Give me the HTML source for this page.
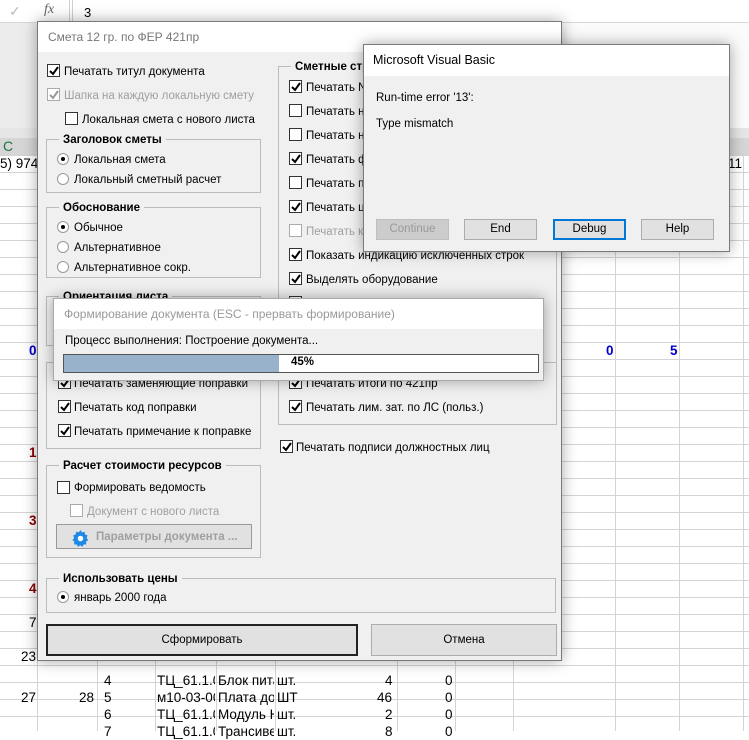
<!DOCTYPE html>
<html><head><meta charset="utf-8"><style>
*{box-sizing:border-box;margin:0;padding:0}
body{width:749px;height:731px;position:relative;overflow:hidden;background:#fff;font-family:"Liberation Sans",sans-serif;font-size:11.5px;color:#000}
.a{position:absolute;white-space:nowrap}
#m .a,#m .lg{margin-top:2px}
.grid{position:absolute;left:0;top:155px;width:749px;height:576px;background:repeating-linear-gradient(to bottom,#d4d4d4 0,#d4d4d4 1px,#fff 1px,#fff 17px)}
.vl{position:absolute;top:155px;width:1px;height:576px;background:#d4d4d4}
.c{position:absolute;font-size:13.5px;line-height:17px;white-space:nowrap;overflow:hidden}
.dlg{position:absolute;background:#f0f0f0;border:1px solid #7a7a7a;box-shadow:0 0 14px rgba(0,0,0,.35)}
.tb{position:absolute;left:0;top:0;right:0;background:#fff}
.cb{position:absolute;width:13px;height:13px;border:1px solid #333;background:#fff}
.cb.g{border-color:#aaa}
.cb svg{position:absolute;left:1px;top:1px}
.rb{position:absolute;width:12px;height:12px;border-radius:50%;border:1px solid #999;background:#fff}
.rb.on::after{content:"";position:absolute;left:3px;top:3px;width:4px;height:4px;border-radius:50%;background:#000}
.grp{position:absolute;border:1px solid #bcbcbc}
.lg{position:absolute;font-weight:bold;background:#f0f0f0;padding:0 4px;font-size:11.5px}
.btn{position:absolute;background:#e1e1e1;border:1px solid #adadad;text-align:center;font-size:11.5px}
.gray{color:#a0a0a0}
</style></head><body>
<div class="a" style="left:0;top:0;width:749px;height:128px;background:#fbfbfb"></div>
<div class="a" style="left:0;top:0;width:749px;height:23px;background:#fff;border-bottom:1px solid #d8d8d8"></div>
<div class="a" style="left:0;top:0;width:70px;height:23px;border-right:1px solid #d0d0d0"></div>
<div class="a" style="left:9px;top:3px;color:#bbb;font-size:14px">✓</div>
<div class="a" style="left:44px;top:2px;color:#666;font-size:14px;font-style:italic;font-family:'Liberation Serif',serif">fx</div>
<div class="a" style="left:72px;top:0;width:677px;height:23px;border-left:1px solid #d0d0d0"></div>
<div class="a" style="left:84px;top:5px;font-size:13px">3</div>
<div class="a" style="left:0;top:23px;width:40px;height:105px;background:#ececec"></div>
<div class="a" style="left:0;top:128px;width:749px;height:10px;background:#e6e6e6"></div>
<div class="a" style="left:0;top:138px;width:749px;height:17px;background:#d6d6d6"></div>
<div class="a" style="left:3px;top:138px;font-size:14px;color:#217346">C</div>
<div class="grid"></div>
<div class="vl" style="left:37px"></div><div class="vl" style="left:97px"></div><div class="vl" style="left:155px"></div><div class="vl" style="left:216px"></div><div class="vl" style="left:275px"></div><div class="vl" style="left:397px"></div><div class="vl" style="left:455px"></div><div class="vl" style="left:513px"></div><div class="vl" style="left:615px"></div><div class="vl" style="left:679px"></div><div class="vl" style="left:743px"></div>
<div class="c" style="left:0;top:155px">5) 974</div>
<div class="c" style="left:728px;top:155px">11</div>
<div class="c" style="left:29px;top:342px;color:#0000cc;font-weight:bold">0</div>
<div class="c" style="left:606px;top:342px;color:#0000cc;font-weight:bold">0</div>
<div class="c" style="left:670px;top:342px;color:#0000cc;font-weight:bold">5</div>
<div class="c" style="left:29px;top:444px;color:#8b0000;font-weight:bold">1</div>
<div class="c" style="left:29px;top:512px;color:#8b0000;font-weight:bold">3</div>
<div class="c" style="left:29px;top:580px;color:#8b0000;font-weight:bold">4</div>
<div class="c" style="left:29px;top:614px">7</div>
<div class="c" style="left:21px;top:648px">23</div>
<div class="c" style="left:104px;top:672px">4</div><div class="c" style="left:157px;top:672px;width:58px">ТЦ_61.1.0</div><div class="c" style="left:218px;top:672px;width:56px">Блок питания</div><div class="c" style="left:277px;top:672px">шт.</div><div class="c" style="left:385px;top:672px">4</div><div class="c" style="left:445px;top:672px">0</div>
<div class="c" style="left:21px;top:689px">27</div><div class="c" style="left:79px;top:689px">28</div><div class="c" style="left:104px;top:689px">5</div><div class="c" style="left:157px;top:689px;width:58px">м10-03-001</div><div class="c" style="left:218px;top:689px;width:56px">Плата доп</div><div class="c" style="left:277px;top:689px">ШТ</div><div class="c" style="left:377px;top:689px">46</div><div class="c" style="left:445px;top:689px">0</div>
<div class="c" style="left:104px;top:706px">6</div><div class="c" style="left:157px;top:706px;width:58px">ТЦ_61.1.0</div><div class="c" style="left:218px;top:706px;width:56px">Модуль Н</div><div class="c" style="left:277px;top:706px">шт.</div><div class="c" style="left:385px;top:706px">2</div><div class="c" style="left:445px;top:706px">0</div>
<div class="c" style="left:104px;top:723px">7</div><div class="c" style="left:157px;top:723px;width:58px">ТЦ_61.1.0</div><div class="c" style="left:218px;top:723px;width:56px">Трансивер</div><div class="c" style="left:277px;top:723px">шт.</div><div class="c" style="left:385px;top:723px">8</div><div class="c" style="left:445px;top:723px">0</div>

<div class="dlg" style="left:37px;top:21px;width:525px;height:640px">
 <div class="tb" style="height:30px"></div>
 <div class="a" style="left:10px;top:8px;color:#777;font-size:12px">Смета 12 гр. по ФЕР 421пр</div>
</div>
<div id="m" class="a" style="left:0;top:0">
<div class="cb" style="left:47px;top:64px"><svg width="10" height="10"><path d="M1 5 L4 8 L9 1" stroke="#000" stroke-width="2" fill="none"/></svg></div><div class="a" style="left:64px;top:64px">Печатать титул документа</div>
<div class="cb g" style="left:47px;top:88px"><svg width="10" height="10"><path d="M1 5 L4 8 L9 1" stroke="#999" stroke-width="2" fill="none"/></svg></div><div class="a gray" style="left:64px;top:88px">Шапка на каждую локальную смету</div>
<div class="cb" style="left:65px;top:112px"></div><div class="a" style="left:82px;top:112px">Локальная смета с нового листа</div>

<div class="grp" style="left:46px;top:139px;width:215px;height:54px"></div><div class="lg" style="left:59px;top:132px">Заголовок сметы</div>
<div class="rb on" style="left:57px;top:153px"></div><div class="a" style="left:74px;top:152px">Локальная смета</div>
<div class="rb" style="left:57px;top:173px"></div><div class="a" style="left:74px;top:172px">Локальный сметный расчет</div>

<div class="grp" style="left:46px;top:207px;width:215px;height:71px"></div><div class="lg" style="left:59px;top:200px">Обоснование</div>
<div class="rb on" style="left:57px;top:221px"></div><div class="a" style="left:74px;top:220px">Обычное</div>
<div class="rb" style="left:57px;top:241px"></div><div class="a" style="left:74px;top:240px">Альтернативное</div>
<div class="rb" style="left:57px;top:261px"></div><div class="a" style="left:74px;top:260px">Альтернативное сокр.</div>

<div class="grp" style="left:46px;top:296px;width:215px;height:50px"></div><div class="lg" style="left:59px;top:289px">Ориентация листа</div>

<div class="grp" style="left:46px;top:362px;width:215px;height:87px"></div>
<div class="cb" style="left:58px;top:376px"><svg width="10" height="10"><path d="M1 5 L4 8 L9 1" stroke="#000" stroke-width="2" fill="none"/></svg></div><div class="a" style="left:74px;top:376px">Печатать заменяющие поправки</div>
<div class="cb" style="left:58px;top:400px"><svg width="10" height="10"><path d="M1 5 L4 8 L9 1" stroke="#000" stroke-width="2" fill="none"/></svg></div><div class="a" style="left:74px;top:400px">Печатать код поправки</div>
<div class="cb" style="left:58px;top:424px"><svg width="10" height="10"><path d="M1 5 L4 8 L9 1" stroke="#000" stroke-width="2" fill="none"/></svg></div><div class="a" style="left:74px;top:424px">Печатать примечание к поправке</div>

<div class="grp" style="left:46px;top:465px;width:215px;height:93px"></div><div class="lg" style="left:59px;top:458px">Расчет стоимости ресурсов</div>
<div class="cb" style="left:57px;top:481px"></div><div class="a" style="left:74px;top:480px">Формировать ведомость</div>
<div class="cb g" style="left:70px;top:504px"></div><div class="a gray" style="left:87px;top:504px">Документ с нового листа</div>
<div class="btn" style="left:56px;top:524px;width:196px;height:25px;border-color:#999"></div>
<svg class="a" style="left:72px;top:528px" width="17" height="17" viewBox="0 0 16 16"><path fill="#1e88e5" d="M8 0l1.3 2.2 2.5-.6.4 2.5 2.4 1-.9 2.4 1.6 2-2.1 1.4.3 2.6-2.6.1-1.1 2.3-2.1-1.5-2.1 1.5-1.1-2.3-2.6-.1.3-2.6L.4 9.5 2 7.5l-.9-2.4 2.4-1 .4-2.5 2.5.6z"/><circle cx="8" cy="8" r="2.6" fill="#fff"/></svg>
<div class="a gray" style="left:96px;top:529px;font-weight:bold">Параметры документа ...</div>

<div class="grp" style="left:46px;top:578px;width:510px;height:35px"></div><div class="lg" style="left:59px;top:571px">Использовать цены</div>
<div class="rb on" style="left:57px;top:591px"></div><div class="a" style="left:74px;top:590px">январь 2000 года</div>

<div class="btn" style="left:46px;top:624px;width:312px;height:32px;border:2px solid #222;line-height:28px">Сформировать</div>
<div class="btn" style="left:371px;top:624px;width:186px;height:32px;line-height:30px">Отмена</div>

<div class="grp" style="left:278px;top:66px;width:279px;height:300px;border-bottom:none"></div><div class="lg" style="left:291px;top:59px">Сметные строки</div>
<div class="cb" style="left:289px;top:80px"><svg width="10" height="10"><path d="M1 5 L4 8 L9 1" stroke="#000" stroke-width="2" fill="none"/></svg></div><div class="a" style="left:306px;top:80px">Печатать N п/п</div>
<div class="cb" style="left:289px;top:104px"></div><div class="a" style="left:306px;top:104px">Печатать н</div>
<div class="cb" style="left:289px;top:128px"></div><div class="a" style="left:306px;top:128px">Печатать н</div>
<div class="cb" style="left:289px;top:152px"><svg width="10" height="10"><path d="M1 5 L4 8 L9 1" stroke="#000" stroke-width="2" fill="none"/></svg></div><div class="a" style="left:306px;top:152px">Печатать ф</div>
<div class="cb" style="left:289px;top:176px"></div><div class="a" style="left:306px;top:176px">Печатать п</div>
<div class="cb" style="left:289px;top:200px"><svg width="10" height="10"><path d="M1 5 L4 8 L9 1" stroke="#000" stroke-width="2" fill="none"/></svg></div><div class="a" style="left:306px;top:200px">Печатать ц</div>
<div class="cb g" style="left:289px;top:224px"></div><div class="a gray" style="left:306px;top:224px">Печатать к</div>
<div class="cb" style="left:289px;top:248px"><svg width="10" height="10"><path d="M1 5 L4 8 L9 1" stroke="#000" stroke-width="2" fill="none"/></svg></div><div class="a" style="left:306px;top:248px">Показать индикацию исключенных строк</div>
<div class="cb" style="left:289px;top:272px"><svg width="10" height="10"><path d="M1 5 L4 8 L9 1" stroke="#000" stroke-width="2" fill="none"/></svg></div><div class="a" style="left:306px;top:272px">Выделять оборудование</div>
<div class="cb" style="left:289px;top:296px"></div>

<div class="grp" style="left:278px;top:362px;width:279px;height:63px"></div>
<div class="cb" style="left:289px;top:376px"><svg width="10" height="10"><path d="M1 5 L4 8 L9 1" stroke="#000" stroke-width="2" fill="none"/></svg></div><div class="a" style="left:306px;top:376px">Печатать итоги по 421пр</div>
<div class="cb" style="left:289px;top:400px"><svg width="10" height="10"><path d="M1 5 L4 8 L9 1" stroke="#000" stroke-width="2" fill="none"/></svg></div><div class="a" style="left:306px;top:400px">Печатать лим. зат. по ЛС (польз.)</div>
<div class="cb" style="left:280px;top:440px"><svg width="10" height="10"><path d="M1 5 L4 8 L9 1" stroke="#000" stroke-width="2" fill="none"/></svg></div><div class="a" style="left:296px;top:440px">Печатать подписи должностных лиц</div>
</div>

<div class="dlg" style="left:53px;top:298px;width:491px;height:83px;border-color:#aaa">
 <div class="tb" style="height:30px"></div>
 <div class="a" style="left:10px;top:8px;color:#999;font-size:12px">Формирование документа (ESC - прервать формирование)</div>
 <div class="a" style="left:11px;top:36px">Процесс выполнения: Построение документа...</div>
 <div class="a" style="left:9px;top:55px;width:476px;height:19px;background:#fff;border:1px solid #555"></div>
 <div class="a" style="left:10px;top:56px;width:215px;height:17px;background:#98b2cc"></div>
 <div class="a" style="left:237px;top:57px;font-weight:bold">45%</div>
</div>

<div class="dlg" style="left:363px;top:44px;width:367px;height:208px">
 <div class="tb" style="height:31px"></div>
 <div class="a" style="left:9px;top:8px;font-size:12.5px">Microsoft Visual Basic</div>
 <div class="a" style="left:12px;top:47px;font-size:11.5px">Run-time error '13':</div>
 <div class="a" style="left:12px;top:73px;font-size:11.5px">Type mismatch</div>
 <div class="btn" style="left:12px;top:174px;width:73px;height:21px;line-height:19px;color:#999;background:#ccc;border-color:#bfbfbf">Continue</div>
 <div class="btn" style="left:100px;top:174px;width:73px;height:21px;line-height:19px">End</div>
 <div class="btn" style="left:189px;top:174px;width:73px;height:21px;line-height:17px;border:2px solid #0078d7">Debug</div>
 <div class="btn" style="left:277px;top:174px;width:73px;height:21px;line-height:19px">Help</div>
</div>
</body></html>
